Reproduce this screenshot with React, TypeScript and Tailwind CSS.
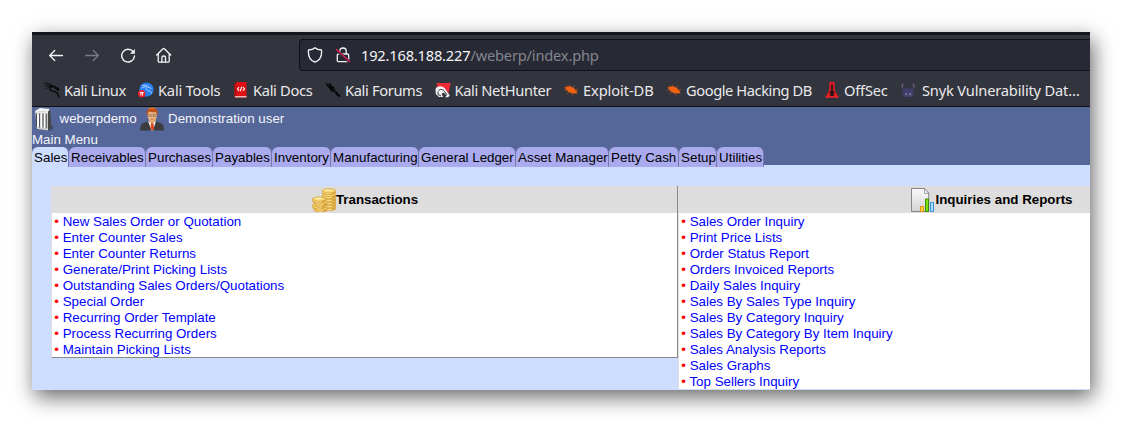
import type { ReactNode } from "react";

const Dragon = ({ color }: { color: string }) => (
  <svg viewBox="0 0 16 16" className="size-4 shrink-0" fill="none" stroke={color} strokeLinecap="round">
    <path d="M.5 1.300C4 .5 6 1.800 8 3.200M1 4.200C4 2.500 6 3 8.500 4.600M2.500 6.500C4 5 5.500 4.500 7 4.700" strokeWidth="1" />
    <path d="M7.500 4C5 5.500 5.200 8.300 8 9c3 .6 5 1 5.800 3l1 3.200" strokeWidth="1.500" />
    <path d="M7.500 4.500h2.500l2.200 1.500 2.300.8M11 5.500l3 2.500" strokeWidth="1.900" />
  </svg>
);

const Tools = () => (
  <svg viewBox="0 0 16 16" className="size-4 shrink-0" fill="none">
    <circle cx="8.500" cy="7.600" r="7.100" fill="#2a80f2" />
    <path d="M4 3.600C6.500 2.800 9 3.500 11 4.800M3.500 6.200C5.500 4.500 7.500 4.700 9 5.300C7.500 7 8.500 8.300 10.500 8.800c2 .4 3 1.500 3.200 3M10 5l3.500 1.500" stroke="#b9d9ff" strokeWidth=".9" />
    <circle cx="3.700" cy="11.800" r="3.700" fill="#e8222c" />
    <path d="M1.800 10.500h3.800M2.900 10.500v3M4.600 10.500v3" stroke="#fff" strokeWidth="1" />
  </svg>
);

const Docs = () => (
  <svg viewBox="0 0 16 16" className="size-4 shrink-0" fill="none">
    <path d="M3.500 0h10v15.500h-12V2z" fill="#e01015" />
    <path d="M1.500 2L3.500 0v13.500l-2 1z" fill="#b00c12" />
    <path d="M2 14h11.500v1.500H1.800z" fill="#e3b9b9" />
    <path d="M6 5.200L4.500 7 6 8.800M10 5.200L11.500 7 10 8.800M8.800 4.800L7.200 9.200" stroke="#fff" strokeWidth="1.100" />
  </svg>
);

const Forums = () => (
  <svg viewBox="0 0 16 16" className="size-4 shrink-0">
    <path d="M0 .5l3 1.200 2-.8 1.600 2.600 2.700 2 1.200 3L13 11l3 3.200-1.200.3 .2 1-3-2-2.400-3L5.800 9 4.200 6 2 4.200z" fill="#050607" />
    <path d="M2 2l3 1.500M8 7l2.500 3" stroke="#4a4c52" strokeWidth=".5" />
  </svg>
);

const NetHunter = () => (
  <svg viewBox="0 0 16 16" className="size-4 shrink-0" fill="none">
    <path d="M1.500 1H15.700l-2.200 10L11 11 3 5z" fill="#ee2b37" />
    <path d="M.5 7C2 3.500 7.500 3 10.300 7l4.500 6.500-1.800 1.700H10l1.800-1.700L8.500 10.500 6.500 12l1.700 3H4L.8 12z" fill="#f4f4f4" />
    <path d="M3 9.500C4.500 6.500 8 7 9.500 9.500l2.500 3.300M3 10v2.500L6 14" stroke="#2a2c33" strokeWidth="1" />
    <path d="M1 4.500l2-1" stroke="#ee2b37" />
  </svg>
);

const Bug = () => (
  <svg viewBox="0 0 16 16" className="size-4 shrink-0" fill="#f0620f">
    <path d="M1.500 5.500l3-1 3-.3L11 6l1.500 2 1.700 1.200-.5 1.800-2 .5-3.200-.2-3-1.300L3.500 8z" />
    <path d="M4.500 5L3 3M7 4.500L6.500 2.500M10 5.500l2-1.500M12.500 8l2.700-.8M13 11l1.500 1.200M9 11.500l.3 2M6 10l-2.500 1.500M3.500 8H1" fill="none" stroke="#a9501f" strokeWidth=".8" />
  </svg>
);

const OffSec = () => (
  <svg viewBox="0 0 16 16" className="size-4 shrink-0">
    <path d="M5.300 0h5.400v8l1.300 2.500 3 5H1l3-5L5.300 8z" fill="#d91e24" />
    <path d="M8 1.500l1 2.500-.2 4.500L11 11l-1.600.5.4 2.500H6.200l.4-2.500L5 11l2.200-2.500L7 4z" fill="#2b1015" />
    <path d="M1.500 15h13" stroke="#f12a2f" />
  </svg>
);

const Snyk = () => (
  <svg viewBox="0 0 16 16" className="size-4 shrink-0">
    <path d="M2.500 7.500L4 6.500h8l1.500 1v7.500H3z" fill="#403d6b" />
    <path d="M3.500 1.200C1.700 3 1.500 5 2.800 7M12.800 1.200c1.700 1.800 1.900 3.800.7 5.800" fill="none" stroke="#403d6b" strokeWidth="1.500" />
    <path d="M3.300 1.800C2.200 3.300 2 4.500 2.500 5.500M13 1.800c1.200 1.500 1.200 2.700.8 3.700" fill="none" stroke="#a77e83" strokeWidth=".7" />
    <path d="M5.500 11l1.700.5v1.700H5.500zM11 11l-1.700.5v1.700H11z" fill="#8b819d" />
  </svg>
);

const bookmarks: { label: string; icon: ReactNode; slot: string; text: string }[] = [
  { label: "Kali Linux", icon: <Dragon color="#08090b" />, slot: "w-[94px]", text: "tracking-[-0.420px]" },
  { label: "Kali Tools", icon: <Tools />, slot: "w-[95px]", text: "tracking-[-0.200px]" },
  { label: "Kali Docs", icon: <Docs />, slot: "w-[92px]", text: "tracking-[-0.320px]" },
  { label: "Kali Forums", icon: <Forums />, slot: "w-[109.500px]", text: "tracking-[-0.350px]" },
  { label: "Kali NetHunter", icon: <NetHunter />, slot: "w-[128.500px]", text: "tracking-[-0.380px]" },
  { label: "Exploit-DB", icon: <Bug />, slot: "w-[103px]", text: "tracking-[-0.100px]" },
  { label: "Google Hacking DB", icon: <Bug />, slot: "w-[158px]", text: "tracking-[-0.420px]" },
  { label: "OffSec", icon: <OffSec />, slot: "w-[76px]", text: "tracking-[-0.200px]" },
  { label: "Snyk Vulnerability Dat…", icon: <Snyk />, slot: "w-[190px]", text: "pl-0.5 tracking-[-0.180px]" },
];

const tabs = [
  { label: "Sales", width: "w-[37px]" },
  { label: "Receivables", width: "w-[77px]" },
  { label: "Purchases", width: "w-[67px]" },
  { label: "Payables", width: "w-[59px]" },
  { label: "Inventory", width: "w-[59px]" },
  { label: "Manufacturing", width: "w-[88px]" },
  { label: "General Ledger", width: "w-[97px]" },
  { label: "Asset Manager", width: "w-[93px]" },
  { label: "Petty Cash", width: "w-[70px]" },
  { label: "Setup", width: "w-[38px]" },
  { label: "Utilities", width: "w-[47px]" },
];

const transactions = [
  "New Sales Order or Quotation",
  "Enter Counter Sales",
  "Enter Counter Returns",
  "Generate/Print Picking Lists",
  "Outstanding Sales Orders/Quotations",
  "Special Order",
  "Recurring Order Template",
  "Process Recurring Orders",
  "Maintain Picking Lists",
];

const inquiries = [
  "Sales Order Inquiry",
  "Print Price Lists",
  "Order Status Report",
  "Orders Invoiced Reports",
  "Daily Sales Inquiry",
  "Sales By Sales Type Inquiry",
  "Sales By Category Inquiry",
  "Sales By Category By Item Inquiry",
  "Sales Analysis Reports",
  "Sales Graphs",
  "Top Sellers Inquiry",
];

const Server = () => (
  <svg viewBox="0 0 24 24" className="size-6 shrink-0">
    <path d="M16 21l5-3v4l-4 2z" fill="#36415f" opacity=".7" />
    <path d="M3 4l5-3 10 1-2 3z" fill="#f5f5f3" />
    <path d="M3 4l13 1v18.500L5 22z" fill="#c9cac7" />
    <path d="M16 5l2-3 1.500 18-3.500 3.500z" fill="#464846" />
    <path d="M6 6.500v13.500M9.300 6.500v14M12.600 6.500v14.500" stroke="#fff" strokeWidth="1.800" />
    <path d="M4.500 6.500v13M7.600 6.500v14M11 6.500v14M14.200 6.500v14.500" stroke="#444a50" strokeWidth="1" />
    <path d="M3 4l13 1v1.500L3 5.500z" fill="#ecece9" />
  </svg>
);

const Person = () => (
  <svg viewBox="0 0 24 24" className="size-6 shrink-0">
    <path d="M0 23.500c0-6 1.500-7.500 8-9h8c6.500 1.500 8 3 8 9z" fill="#3d3d3f" />
    <path d="M8 14l3.500 9.500h1.500L16 14l-4 1z" fill="#f4f1ed" />
    <path d="M11 16h2.200l1 5.500-1.800 2-1.800-2z" fill="#e3441b" />
    <path d="M9 10h6.500v4.300L12.200 16.500 9 14.300z" fill="#e09b66" />
    <ellipse cx="12.200" cy="8.200" rx="4.700" ry="6" fill="#efb57f" />
    <path d="M6.900 8.500C6 3.500 8.200.2 12.300.2S18.300 3.500 17.500 8.500L16.300 5.200c-2.800.3-5.600-.2-7.300-.7z" fill="#bd5014" />
    <path d="M8.500 2.700c2-2 5-2 7-.5" fill="none" stroke="#e77d35" />
    <path d="M8 7.500h3.300v2H8.300zM13 7.500h3.300l-.3 2h-3zM11.300 8H13" fill="#d9ae86" stroke="#8d6a4d" strokeWidth=".6" />
    <path d="M10.700 12.200h3" stroke="#a85531" strokeWidth=".7" />
  </svg>
);

const coin = (cx: number, cy: number, key: string) => (
  <g key={key}>
    <path d={`M${cx - 6.8} ${cy}v2a6.800 2.300 0 0 0 13.600 0V${cy}`} fill="#d9a23a" />
    <path d={`M${cx - 6} ${cy + 1.2}q5 3 9 1.200`} fill="none" stroke="#f8dd8b" strokeWidth="1.200" />
    <ellipse cx={cx} cy={cy} rx="6.600" ry="2.200" fill="#f7d873" stroke="#cb9637" strokeWidth=".5" />
  </g>
);

const Coins = () => (
  <svg viewBox="0 0 24 24" className="size-6 shrink-0">
    {[18.5, 15.5, 12.5, 9.5, 6.5, 2.8].map((y) => coin(17, y, `b${y}`))}
    {[20, 17, 14, 11].map((y, i) => coin(i % 2 ? 7 : 8.5, y, `f${y}`))}
    <path d="M13.500 2.500h6M4 10.700h5" stroke="#fff3bb" strokeWidth="1.200" />
  </svg>
);

const Report = () => (
  <svg viewBox="0 0 24 24" className="size-6 shrink-0">
    <defs>
      <linearGradient id="paper" x1="0" y1="0" x2="0" y2="1">
        <stop stopColor="#fafafa" />
        <stop offset="1" stopColor="#d3d3d6" />
      </linearGradient>
    </defs>
    <path d="M.5.500H13.500l4.200 4.500v18.500H.5z" fill="url(#paper)" stroke="#85858b" />
    <path d="M13.500.5v4.800h4.200z" fill="#fff" stroke="#85858b" strokeWidth=".8" />
    <path d="M9.500 18.500h3v5h-3z" fill="#ffe43b" stroke="#e98a0b" />
    <path d="M14.500 11h3v12.500h-3z" fill="#7be00d" stroke="#3a8d0a" />
    <path d="M19.500 14.500h3v9h-3z" fill="#a5dcff" stroke="#3991dc" />
  </svg>
);

const LinkList = ({ items }: { items: string[] }) => (
  <ul className="bg-white pl-[2.300px]">
    {items.map((item) => (
      <li key={item} className="h-4 whitespace-pre leading-[17px] text-[#ff0000]">
        {"• "}
        <a className="text-[#0000ff]">{item}</a>
      </li>
    ))}
  </ul>
);

const icon = "size-4 shrink-0";

export default function App() {
  return (
    <div className="h-[422px] w-[1122px] overflow-hidden bg-white p-8">
      <div className="flex h-[358px] w-[1058px] flex-col bg-[#ccddff] shadow-[3px_7px_20px_0_rgba(0,0,0,0.600)]">
        <div className="flex h-full flex-col overflow-hidden">
          <header className="flex h-[75px] shrink-0 flex-col border-t-3 border-b border-t-[#14161e] border-b-[#0e0f13] bg-[#33353e] font-['Noto_Sans',sans-serif]">
            <div className="flex h-10 shrink-0 items-center">
              <div className="flex w-[267px] shrink-0 items-center gap-5 pl-4 text-[#f5f5f7]">
                <svg viewBox="0 0 16 16" className={icon} fill="none" stroke="currentColor" strokeWidth="1.300" strokeLinecap="round" strokeLinejoin="round">
                  <path d="M14.500 8.500H1.700M6.700 3.500L1.700 8.500l5 5" />
                </svg>
                <svg viewBox="0 0 16 16" className={icon} fill="none" stroke="#797b82" strokeWidth="1.300" strokeLinecap="round" strokeLinejoin="round">
                  <path d="M1.500 8.500h12.800M9.300 3.500l5 5-5 5" />
                </svg>
                <svg viewBox="0 0 16 16" className={icon} fill="none" stroke="currentColor" strokeWidth="1.400" strokeLinecap="round">
                  <path d="M13.200 4.700A6.400 6.400 0 1 0 14.500 9" />
                  <path d="M14.800 2v4.800H10z" fill="currentColor" stroke="none" />
                </svg>
                <svg viewBox="0 0 16 16" className={icon} fill="none" stroke="currentColor" strokeWidth="1.300" strokeLinecap="round" strokeLinejoin="round">
                  <path d="M.7 8l6.300-6.200q.7-.6 1.400 0L14.700 8M2.200 7v7q0 1.200 1.200 1.200h8.600q1.200 0 1.200-1.200V7" />
                  <path d="M5.900 15v-4.500q0-1.500 1.800-1.500t1.800 1.500V15" />
                </svg>
              </div>
              <div className="flex h-8 grow items-center rounded-l-[4px] border border-r-0 border-[#101116] bg-[#272934] pl-[7px] text-[#f5f5f7]">
                <svg viewBox="0 0 16 16" className={icon} fill="none" stroke="currentColor" strokeWidth="1.300" strokeLinejoin="round">
                  <path d="M8 .8C9.500 2.200 12 2.900 14.500 3c.5 5.500-1.200 10.500-6.500 12.200C2.700 13.500 1 8.500 1.500 3 4 2.900 6.500 2.200 8 .8z" />
                </svg>
                <svg viewBox="0 0 16 16" className="ml-3 size-4 shrink-0" fill="none" stroke="currentColor" strokeWidth="1.300">
                  <path d="M4.800 7V4q0-3 3.200-3t3.200 3v3M3.500 7h9q1.200 0 1.200 1.200v5.300q0 1.200-1.200 1.200h-9q-1.200 0-1.200-1.200V8.200Q2.300 7 3.500 7z" />
                  <path d="M1 2.500l13.500 12.300" stroke="#272934" strokeWidth="3" />
                  <path d="M1 2l14 13" stroke="#e21f54" strokeWidth="1.400" />
                </svg>
                <span className="ml-2.5 text-[14.670px] tracking-[-0.200px] whitespace-nowrap">
                  192.168.188.227<span className="text-[#85868e]">/weberp/index.php</span>
                </span>
              </div>
            </div>
            <nav className="flex h-[30px] items-center pl-3 text-[#e9e9ec]">
              {bookmarks.map((b) => (
                <div key={b.label} className={`flex h-5 shrink-0 items-center gap-1 ${b.slot}`}>
                  {b.icon}
                  <span className={`text-[14.670px] leading-5 whitespace-nowrap ${b.text}`}>{b.label}</span>
                </div>
              ))}
            </nav>
          </header>

          <main className="font-['Liberation_Sans',Arial,sans-serif] text-[13.330px]">
            <div className="h-[58px] bg-[#556699] text-[#f3f5fb]">
              <div className="flex h-6 items-center">
                <Server />
                <span className="ml-[3.500px] w-[80.500px]">weberpdemo</span>
                <Person />
                <span className="ml-1">Demonstration user</span>
              </div>
              <div className="h-4 leading-[18px]">Main Menu</div>
              <div className="flex h-5 text-black">
                {tabs.map((t, i) => (
                  <div
                    key={t.label}
                    className={`h-5 shrink-0 rounded-t-[6px] border-r border-[#777aa9] pl-[2.100px] leading-[21px] whitespace-nowrap ${t.width} ${i === 0 ? "bg-[#ccddff]" : "bg-[#aaaaee]"}`}
                  >
                    {t.label}
                  </div>
                ))}
              </div>
            </div>
            <div className="flex items-start pt-[21px] pl-[19px]">
              <section className="w-[627px] shrink-0 border-r border-b border-l border-r-[#888] border-b-[#888] border-l-[#ddd]">
                <h2 className="flex h-[27px] items-center justify-center bg-[#dddddd] pl-px font-bold">
                  <Coins />
                  Transactions
                </h2>
                <LinkList items={transactions} />
              </section>
              <section className="w-[627px] shrink-0 border-l border-[#ddd]">
                <h2 className="flex h-[27px] items-center justify-center bg-[#dddddd] font-bold">
                  <Report />
                  Inquiries and Reports
                </h2>
                <LinkList items={inquiries} />
              </section>
            </div>
          </main>
        </div>
      </div>
    </div>
  );
}
